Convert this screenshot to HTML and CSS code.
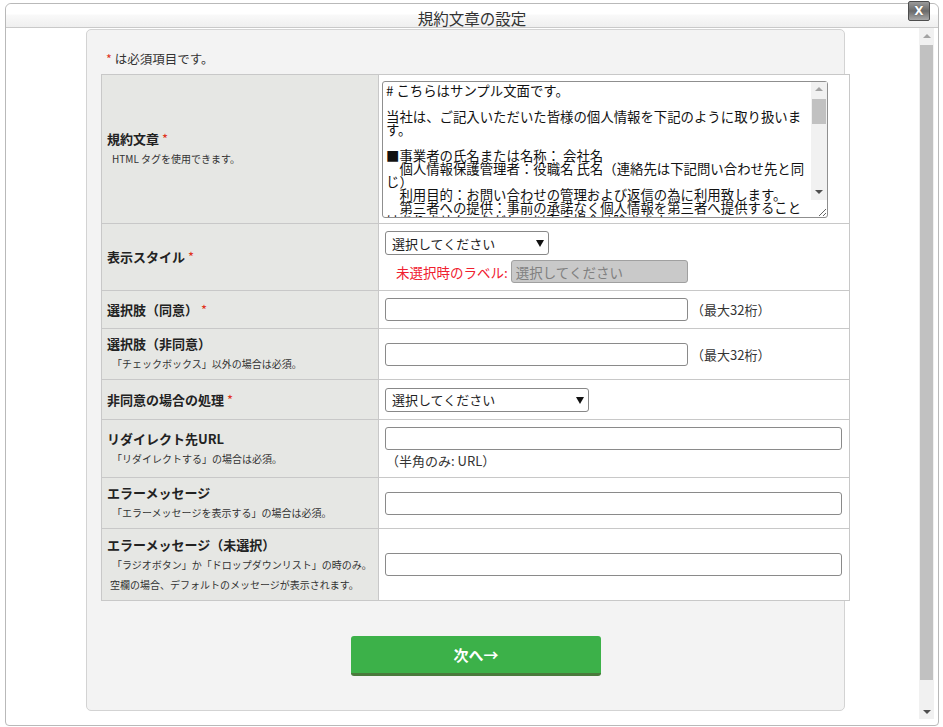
FILE: index.html
```html
<!DOCTYPE html>
<html lang="ja">
<head>
    <meta charset="UTF-8">
    <meta name="viewport" content="width=device-width, initial-scale=1.0">
    <title>規約文章の設定</title>
    <link rel="stylesheet" href="styles.css">
</head>
<body>
    <div class="dialog">
        <div class="dialog-head">
            <span class="dialog-title">規約文章の設定</span>
            <button class="close-btn" type="button">X</button>
        </div>

        <div class="dialog-body">
            <div class="body-content">
                <div class="panel">
                    <p class="note"><span class="req">*</span> は必須項目です。</p>

                    <table class="form-table">
                        <!-- 規約文章 -->
                        <tr class="row-terms">
                            <th>
                                <div class="label">規約文章 <span class="req">*</span></div>
                                <div class="sub">HTML タグを使用できます。</div>
                            </th>
                            <td class="cell-area">
                                <div class="terms-wrap">
<textarea class="terms" wrap="off"># こちらはサンプル文面です。

当社は、ご記入いただいた皆様の個人情報を下記のように取り扱いま
す。

■事業者の氏名または名称： 会社名
　個人情報保護管理者：役職名 氏名（連絡先は下記問い合わせ先と同
じ）
　利用目的：お問い合わせの管理および返信の為に利用致します。
　第三者への提供：事前の承諾なく個人情報を第三者へ提供すること
はありません。ただし、以下の場合は除きます。
　・法令に基づく場合</textarea>
                                    <div class="scrollbar scrollbar-sm">
                                        <span class="sb-up"></span>
                                        <span class="sb-thumb"></span>
                                        <span class="sb-fill"></span>
                                        <span class="sb-down"></span>
                                    </div>
                                </div>
                            </td>
                        </tr>

                        <!-- 表示スタイル -->
                        <tr class="row-style">
                            <th>
                                <div class="label">表示スタイル <span class="req">*</span></div>
                            </th>
                            <td>
                                <span class="select-wrap select-sm">
                                    <select><option>選択してください</option></select>
                                </span>
                                <div class="unselected">
                                    <span class="unselected-label">未選択時のラベル:</span>
                                    <input type="text" class="input-disabled" value="選択してください" disabled>
                                </div>
                            </td>
                        </tr>

                        <tr class="row-agree">
                            <th>
                                <div class="label">選択肢（同意） <span class="req">*</span></div>
                            </th>
                            <td>
                                <input type="text" class="input-md"><span class="hint">（最大32桁）</span>
                            </td>
                        </tr>

                        <tr class="row-disagree">
                            <th>
                                <div class="label">選択肢（非同意）</div>
                                <div class="sub">「チェックボックス」以外の場合は必須。</div>
                            </th>
                            <td>
                                <input type="text" class="input-md"><span class="hint">（最大32桁）</span>
                            </td>
                        </tr>

                        <tr class="row-action">
                            <th>
                                <div class="label">非同意の場合の処理 <span class="req">*</span></div>
                            </th>
                            <td>
                                <span class="select-wrap select-lg">
                                    <select><option>選択してください</option></select>
                                </span>
                            </td>
                        </tr>

                        <tr class="row-redirect">
                            <th>
                                <div class="label">リダイレクト先URL</div>
                                <div class="sub">「リダイレクトする」の場合は必須。</div>
                            </th>
                            <td>
                                <input type="text" class="input-full">
                                <div class="hint-below">（半角のみ: URL）</div>
                            </td>
                        </tr>

                        <tr class="row-error">
                            <th>
                                <div class="label">エラーメッセージ</div>
                                <div class="sub">「エラーメッセージを表示する」の場合は必須。</div>
                            </th>
                            <td>
                                <input type="text" class="input-full">
                            </td>
                        </tr>

                        <tr class="row-error-empty">
                            <th>
                                <div class="label">エラーメッセージ（未選択）</div>
                                <div class="sub">「ラジオボタン」か「ドロップダウンリスト」の時のみ。</div>
                                <div class="sub sub-tight">空欄の場合、デフォルトのメッセージが表示されます。</div>
                            </th>
                            <td>
                                <input type="text" class="input-full">
                            </td>
                        </tr>
                    </table>

                    <div class="actions">
                        <button class="btn-next" type="button">次へ→</button>
                    </div>
                </div>
            </div>

            <div class="scrollbar scrollbar-main">
                <span class="sb-up"></span>
                <span class="sb-thumb"></span>
                <span class="sb-fill"></span>
                <span class="sb-down"></span>
            </div>
        </div>
    </div>
</body>
</html>
```

FILE: styles.css
```css
* {
    margin: 0;
    padding: 0;
    box-sizing: border-box;
}

html, body {
    height: 100%;
}

body {
    font-family: "Noto Sans CJK JP", "Noto Sans", sans-serif;
    color: #333;
    background: #fff;
    overflow: hidden;
}

/* dialog frame */
.dialog {
    position: relative;
    height: 723px;
    margin: 3px 4px 0 5px;
    border: 1px solid #b9b9b9;
    border-radius: 6px 6px 4px 4px;
    display: flex;
    flex-direction: column;
    background: #fff;
}

.dialog-head {
    height: 24px;
    flex: none;
    text-align: center;
    border-bottom: 1px solid #c9c9c9;
    background: linear-gradient(to bottom, #fff 0, #fff 10px, #f9f9f9 11px, #efefef 100%);
    border-radius: 6px 6px 0 0;
}

.dialog-title {
    display: inline-block;
    font-size: 15.5px;
    line-height: 20px;
    padding-top: 4px;
    color: #333;
}

.close-btn {
    position: absolute;
    top: -3px;
    right: 8px;
    width: 22px;
    height: 20px;
    border: 1px solid #4d4d4d;
    border-radius: 2px;
    background: linear-gradient(to bottom, #9a9a9a 0%, #6a6a6a 50%, #a8a8a8 100%);
    color: #fff;
    font-family: "DejaVu Sans", sans-serif;
    font-weight: 700;
    font-size: 12px;
    line-height: 16px;
    text-shadow: 0 0 1px #333;
    cursor: pointer;
}

.dialog-body {
    flex: 1;
    display: flex;
    margin: 0 4px 6px 0;
    min-height: 0;
}

.body-content {
    flex: 1;
    overflow: hidden;
    padding-top: 1px;
}

/* fake scrollbars (the screenshot shows classic ones) */
.scrollbar {
    display: flex;
    flex-direction: column;
    background: #f1f1f1;
}

.scrollbar-main {
    width: 15px;
    flex: none;
}

.sb-up,
.sb-down {
    height: 15px;
    flex: none;
    display: flex;
    align-items: center;
    justify-content: center;
}

.sb-up::before {
    content: "";
    border-left: 4px solid transparent;
    border-right: 4px solid transparent;
    border-bottom: 4px solid #a3a3a3;
}

.sb-down::before {
    content: "";
    border-left: 4px solid transparent;
    border-right: 4px solid transparent;
    border-top: 4px solid #505050;
}

.sb-thumb {
    flex: none;
    margin: 2px 1px 0;
    background: #c1c1c1;
}

.scrollbar-main .sb-thumb {
    height: 635px;
}

.sb-fill {
    flex: 1;
}

/* grey panel */
.panel {
    width: 759px;
    margin-left: 80px;
    background: #f3f3f3;
    border: 1px solid #d3d3d3;
    border-radius: 5px;
    padding: 20px 0 34px 14px;
}

.note {
    font-size: 12.5px;
    line-height: 18px;
    padding-left: 5px;
    margin-bottom: 6px;
}

.req {
    color: #e0321c;
    font-weight: 400;
}

/* form table */
.form-table {
    width: 749px;
    border-collapse: collapse;
    background: #fff;
}

.form-table th,
.form-table td {
    border: 1px solid #c8c8c8;
    vertical-align: middle;
    text-align: left;
}

.form-table th {
    width: 277px;
    background: #e6e7e4;
    padding: 2px 5px;
    font-weight: 400;
}

.form-table td {
    padding: 3px 6px;
    font-size: 13px;
}

.label {
    font-size: 13px;
    font-weight: 700;
    line-height: 20px;
    color: #222;
}

.sub {
    font-size: 10px;
    line-height: 20px;
    padding-left: 5px;
    color: #333;
}

.sub-tight {
    padding-left: 3px;
}

.row-terms th { height: 149px; }
.row-style th { height: 67px; }
.row-agree th { height: 38px; }
.row-disagree th { height: 51px; }
.row-action th { height: 40px; }
.row-redirect th { height: 58px; }
.row-error th { height: 51px; }
.row-error-empty th { height: 72px; }

.form-table td.cell-area {
    padding: 5px 3px;
}

.terms-wrap {
    position: relative;
    width: 446px;
}

.terms {
    display: block;
    width: 446px;
    height: 137px;
    border: 1px solid #8f8f8f;
    border-radius: 3px;
    padding: 2px 20px 2px 3px;
    font-family: "Noto Sans CJK JP", sans-serif;
    font-size: 13.4px;
    line-height: 13px;
    color: #111;
    overflow: hidden;
    resize: vertical;
}

.scrollbar-sm {
    position: absolute;
    top: 1px;
    right: 1px;
    width: 16px;
    height: 118px;
}

.scrollbar-sm .sb-thumb {
    height: 25px;
}

/* inputs */
input[type="text"] {
    height: 23px;
    border: 1px solid #8a8a8a;
    border-radius: 3px;
    padding: 0 6px;
    font-family: "Noto Sans CJK JP", sans-serif;
    font-size: 13px;
    vertical-align: middle;
    background: #fff;
}

.input-md {
    width: 303px;
}

.input-full {
    width: 457px;
    display: block;
}

.input-disabled {
    width: 177px;
    height: 22px;
    background: #c9c9c9 !important;
    color: #808080;
    border-color: #a0a0a0 !important;
    padding: 0 4px !important;
    font-size: 13.5px !important;
}

.hint {
    margin-left: 3px;
    vertical-align: middle;
    font-size: 13px;
    color: #333;
}

.hint-below {
    font-size: 13px;
    line-height: 18px;
    margin-top: 2px;
    padding-left: 1px;
}

.select-wrap {
    position: relative;
    display: inline-block;
}

.select-wrap select {
    appearance: none;
    -webkit-appearance: none;
    height: 24px;
    border: 1px solid #888;
    border-radius: 3px;
    background: #fff;
    padding: 0 20px 0 6px;
    font-family: "Noto Sans CJK JP", sans-serif;
    font-size: 13px;
    color: #222;
    display: block;
}

.select-wrap::after {
    content: "";
    position: absolute;
    top: 9px;
    right: 5px;
    border-left: 4px solid transparent;
    border-right: 4px solid transparent;
    border-top: 7px solid #111;
}

.select-sm select {
    width: 164px;
}

.select-lg select {
    width: 204px;
}

.unselected {
    display: flex;
    align-items: center;
    margin-top: 5px;
    padding-left: 11px;
}

.unselected-label {
    color: #f0202f;
    font-size: 13.5px;
    margin-right: 3px;
}

/* submit */
.actions {
    padding: 35px 0 0 250px;
}

.btn-next {
    width: 250px;
    height: 40px;
    border: none;
    border-bottom: 3px solid #4a7a3c;
    border-radius: 3px;
    background: #3cb149;
    color: #fff;
    font-family: "Noto Sans CJK JP", sans-serif;
    font-size: 15px;
    font-weight: 700;
    cursor: pointer;
}
```
